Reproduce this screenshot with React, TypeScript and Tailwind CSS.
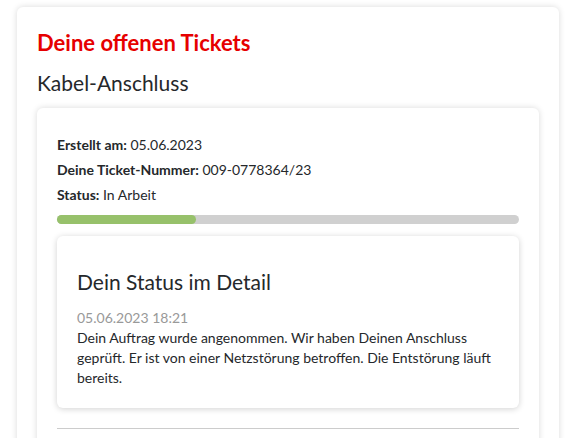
import React from 'react';

const font = { fontFamily: 'Lato, "Noto Sans", sans-serif' };

function InfoRow({ label, value }: { label: string; value: string }) {
  return (
    <p className="text-[14px] leading-[25px] text-[#25282b]">
      <span className="font-bold">{label}</span> {value}
    </p>
  );
}

export default function App() {
  const progress = 30;

  return (
    <div className="min-h-[438px] bg-white pt-[7px] pl-[17px] overflow-hidden" style={font}>
      <div className="w-[542px] h-[440px] rounded-md bg-white shadow-[0_0_6px_rgba(0,0,0,0.15)] px-5 pt-[22px]">
        <h1 className="text-[22px] leading-[28px] font-bold text-[#e60000]">Deine offenen Tickets</h1>
        <h2 className="mt-[12px] text-[21px] leading-[28px] text-[#25282b]">Kabel-Anschluss</h2>

        <div className="mt-[11px] rounded-md bg-white shadow-[0_0_6px_rgba(0,0,0,0.15)] px-5 pt-[24px] pb-5">
          <InfoRow label="Erstellt am:" value="05.06.2023" />
          <InfoRow label="Deine Ticket-Nummer:" value="009-0778364/23" />
          <InfoRow label="Status:" value="In Arbeit" />

          <div className="mt-[8px] h-[9px] w-full rounded-full bg-[#d0d0d0]">
            <div className="h-full rounded-full bg-[#97c16b]" style={{ width: `${progress}%` }} />
          </div>

          <div className="mt-[12px] rounded-md bg-white shadow-[0_1px_6px_rgba(0,0,0,0.18)] px-5 pt-[33px] pb-5">
            <h3 className="text-[21px] leading-[26px] text-[#25282b]">Dein Status im Detail</h3>
            <p className="mt-[13px] text-[14px] leading-[20px] text-[#999999]">05.06.2023 18:21</p>
            <p className="text-[14px] leading-[20px] text-[#25282b]">
              Dein Auftrag wurde angenommen. Wir haben Deinen Anschluss geprüft. Er ist von einer Netzstörung
              betroffen. Die Entstörung läuft bereits.
            </p>
          </div>

          <div className="mt-5 border-t border-[#cccccc]" />
        </div>
      </div>
    </div>
  );
}
